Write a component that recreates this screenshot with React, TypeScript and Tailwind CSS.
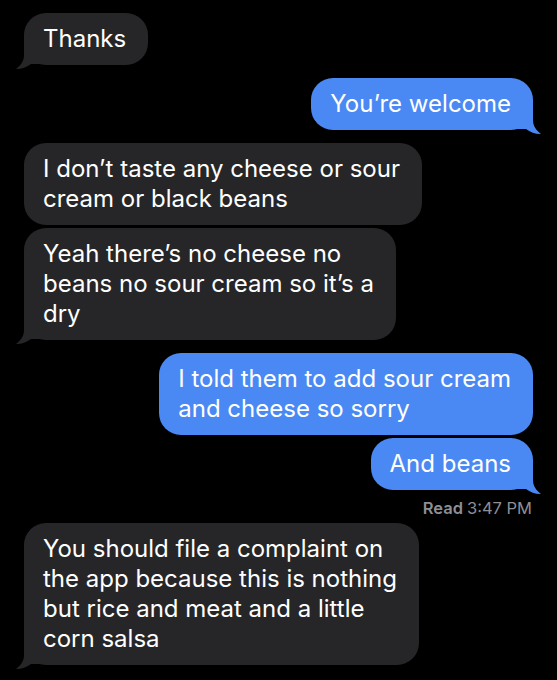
import React from "react";

const GRAY = "#262628";
const BLUE = "#4a89f3";

function TailLeft({ color }: { color: string }) {
  return (
    <svg className="absolute left-[-8px] bottom-[-4px]" width="24" height="26" viewBox="0 0 24 26">
      <path d="M8 0 L8 12 C8 18 5 22 0 26 C6 26 11 24 15 21 L24 21 L24 0 Z" fill={color} />
    </svg>
  );
}

function TailRight({ color }: { color: string }) {
  return (
    <svg className="absolute right-[-8px] bottom-[-4px]" width="24" height="26" viewBox="0 0 24 26">
      <path d="M16 0 L16 12 C16 18 19 22 24 26 C18 26 13 24 9 21 L0 21 L0 0 Z" fill={color} />
    </svg>
  );
}

function Bubble({
  lines,
  side,
  tail,
}: {
  lines: string[];
  side: "left" | "right";
  tail?: boolean;
}) {
  const color = side === "left" ? GRAY : BLUE;
  return (
    <div className={side === "left" ? "flex justify-start pl-[24px]" : "flex justify-end pr-[24px]"}>
      <div
        className="relative rounded-[22px] pl-[19px] pr-[22px] py-[11px] text-white text-[24px] leading-[30px] whitespace-nowrap"
        style={{ backgroundColor: color }}
      >
        {tail && (side === "left" ? <TailLeft color={color} /> : <TailRight color={color} />)}
        <div className="relative">
          {lines.map((l, i) => (
            <div key={i}>{l}</div>
          ))}
        </div>
      </div>
    </div>
  );
}

export default function App() {
  return (
    <div
      className="w-[557px] h-[680px] bg-black overflow-hidden flex flex-col pt-[13px]"
      style={{ fontFamily: 'Inter, "Liberation Sans", Arial, sans-serif' }}
    >
      <Bubble side="left" tail lines={["Thanks"]} />
      <div className="h-[13px]" />
      <Bubble side="right" tail lines={["You’re welcome"]} />
      <div className="h-[13px]" />
      <Bubble side="left" lines={["I don’t taste any cheese or sour", "cream or black beans"]} />
      <div className="h-[3px]" />
      <Bubble
        side="left"
        tail
        lines={["Yeah there’s no cheese no", "beans no sour cream so it’s a", "dry"]}
      />
      <div className="h-[13px]" />
      <Bubble side="right" lines={["I told them to add sour cream", "and cheese so sorry"]} />
      <div className="h-[3px]" />
      <Bubble side="right" tail lines={["And beans"]} />
      <div className="flex justify-end pr-[25px] pt-[8px] pb-[5px] text-[16.5px] leading-[20px] text-[#8e8e93]">
        <span className="font-semibold">Read</span>
        <span className="ml-[4px]">3:47 PM</span>
      </div>
      <Bubble
        side="left"
        tail
        lines={[
          "You should file a complaint on",
          "the app because this is nothing",
          "but rice and meat and a little",
          "corn salsa",
        ]}
      />
    </div>
  );
}
